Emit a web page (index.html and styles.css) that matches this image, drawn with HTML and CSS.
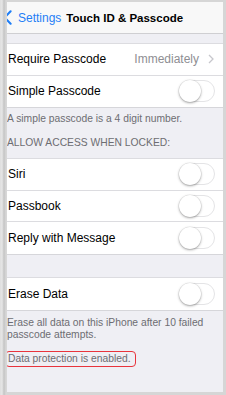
FILE: index.html
```html
<!DOCTYPE html>
<html>
<head>
<meta charset="utf-8">
<link rel="stylesheet" href="styles.css">
</head>
<body>
<div class="frame">
  <div class="screen">
    <div class="nav">
      <svg class="back-icon" width="9" height="15" viewBox="0 0 9 15"><path d="M7.6 1.3 L1.6 7.5 L7.6 13.7" fill="none" stroke="#1f7ef6" stroke-width="2.1" stroke-linecap="round" stroke-linejoin="round"/></svg>
      <span class="back-label">Settings</span>
      <span class="nav-title">Touch ID &amp; Passcode</span>
    </div>
    <div class="gap-top"></div>
    <div class="group">
      <div class="row sep">
        <span class="label">Require Passcode</span>
        <span class="value">Immediately</span>
        <svg class="chev" width="6" height="10" viewBox="0 0 6 10"><path d="M1 1 L5 5 L1 9" fill="none" stroke="#c7c7cc" stroke-width="1.3"/></svg>
      </div>
      <div class="row">
        <span class="label">Simple Passcode</span>
        <span class="toggle"><span class="knob"></span></span>
      </div>
    </div>
    <p class="footer first">A simple passcode is a 4 digit number.</p>
    <p class="header">ALLOW ACCESS WHEN LOCKED:</p>
    <div class="group">
      <div class="row sep">
        <span class="label">Siri</span>
        <span class="toggle"><span class="knob"></span></span>
      </div>
      <div class="row sep">
        <span class="label">Passbook</span>
        <span class="toggle"><span class="knob"></span></span>
      </div>
      <div class="row">
        <span class="label">Reply with Message</span>
        <span class="toggle"><span class="knob"></span></span>
      </div>
    </div>
    <div class="gap-mid"></div>
    <div class="group">
      <div class="row">
        <span class="label">Erase Data</span>
        <span class="toggle"><span class="knob"></span></span>
      </div>
    </div>
    <p class="footer erase">Erase all data on this iPhone after 10 failed passcode attempts.</p>
    <p class="footer protect"><span class="highlight">Data protection is enabled.</span></p>
  </div>
</div>
</body>
</html>
```
FILE: styles.css
```css
html, body {
  margin: 0;
  padding: 0;
}
body {
  width: 226px;
  height: 395px;
  overflow: hidden;
  background: #d2d2d2;
  font-family: "Liberation Sans", Arial, sans-serif;
}
.frame {
  height: 395px;
  box-sizing: border-box;
  padding: 2px 3px 3px 7px;
  background: linear-gradient(to right, #dedede 0, #e6e6e6 2px, #c4c4c4 4px, #d8d8d8 6px, #d6d6d6 7px, #d6d6d6 100%);
}
.screen {
  height: 100%;
  background: #efeff4;
  overflow: hidden;
}
.nav {
  height: 31px;
  background: #f8f8f8;
  border-bottom: 1px solid #cfcfd2;
  display: flex;
  align-items: center;
}
.back-icon {
  margin-left: -4px;
  margin-right: 6px;
  flex: none;
}
.back-label {
  color: #1f7ef6;
  font-size: 12px;
  margin-right: 5px;
}
.nav-title {
  color: #000;
  font-size: 11.5px;
  font-weight: bold;
}
.gap-top {
  height: 9px;
}
.group {
  background: #fff;
  border-top: 0.5px solid #dcdce0;
  border-bottom: 0.5px solid #d6d6da;
}
.row {
  height: 31.5px;
  display: flex;
  align-items: center;
  padding: 0 8px 0 1px;
  box-sizing: border-box;
}
.row.sep {
  border-bottom: 0.5px solid #dcdce0;
}
.label {
  font-size: 12px;
  color: #000;
  flex: 1;
}
.value {
  font-size: 12px;
  color: #8e8e93;
  margin-right: 9px;
}
.chev {
  margin-right: 1px;
}
.toggle {
  width: 36px;
  height: 22px;
  box-sizing: border-box;
  border: 1px solid #e4e4e6;
  border-radius: 11px;
  position: relative;
  background: #fff;
}
.knob {
  position: absolute;
  left: -1px;
  top: -1px;
  width: 22px;
  height: 22px;
  border-radius: 50%;
  background: #fff;
  box-shadow: 0 1px 2.5px rgba(0,0,0,0.35), 0 0 0 0.5px rgba(0,0,0,0.08);
}
.footer, .header {
  margin: 0;
  font-size: 10.3px;
  line-height: 12px;
  color: #6d6d72;
}
.footer.first {
  padding-top: 5px;
  height: 12px;
}
.header {
  padding-top: 12px;
  height: 12px;
  padding-bottom: 9px;
}
.gap-mid {
  height: 22.5px;
}
.footer.erase {
  padding-top: 6px;
  padding-right: 10px;
}
.footer.protect {
  padding-top: 10px;
}
.highlight {
  display: inline-block;
  margin-left: -2px;
  padding: 1px 4px 1px 2px;
  border: 1px solid #e8343c;
  border-radius: 4px;
}
```
